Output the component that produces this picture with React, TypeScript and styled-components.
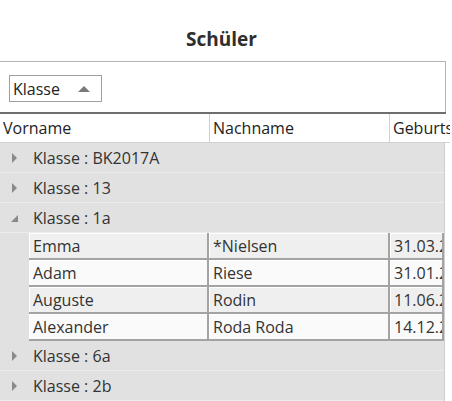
import React from "react";
import styled, { createGlobalStyle } from "styled-components";

const Global = createGlobalStyle`
  html, body { margin: 0; padding: 0; background: #ffffff; }
  body { font-family: "Open Sans", "Noto Sans", sans-serif; color: #333333; }
`;

const Page = styled.div`
  width: 452px;
  height: 401px;
  overflow: hidden;
  display: flex;
  flex-direction: column;
`;

const Title = styled.h1`
  margin: 0;
  height: 61px;
  box-sizing: border-box;
  padding-top: 27px;
  padding-right: 9px;
  text-align: center;
  font-size: 19px;
  font-weight: 700;
  color: #2e2e2e;
  line-height: 24px;
`;

const Panel = styled.div`
  margin-left: -2px;
  width: 448px;
  display: flex;
  flex-direction: column;
`;

const Toolbar = styled.div`
  height: 51px;
  box-sizing: border-box;
  border: 1px solid #b4b4b4;
  border-bottom: none;
  padding: 13px 0 0 10px;
`;

const GroupChip = styled.div`
  width: 93px;
  height: 27px;
  box-sizing: border-box;
  border: 1px solid #a0a0a0;
  display: flex;
  align-items: center;
  justify-content: space-between;
  padding: 0 11px 0 3px;
  font-size: 16px;
  color: #222222;
`;

const SortArrow = styled.span`
  width: 0;
  height: 0;
  border-left: 6px solid transparent;
  border-right: 6px solid transparent;
  border-bottom: 6px solid #7a7a7a;
`;

const Grid = styled.div`
  border-top: 2px solid #6e6e6e;
  display: flex;
  flex-direction: column;
`;

const HeaderRow = styled.div`
  display: grid;
  grid-template-columns: 210px 180px 1fr;
  height: 28px;
  border-bottom: 1px solid #d2d2d2;
  margin-left: 2px;
  width: 450px;
`;

const HeaderCell = styled.div<{ $last?: boolean }>`
  display: flex;
  align-items: center;
  padding-left: 3px;
  font-size: 16px;
  color: #222222;
  white-space: nowrap;
  overflow: hidden;
  border-right: ${(p) => (p.$last ? "none" : "1px solid #cfcfcf")};
`;

const Body = styled.div`
  margin-left: 2px;
  width: 444px;
  border-right: 1px solid #cfcfcf;
  background: #e1e1e1;
  display: flex;
  flex-direction: column;
`;

const GroupRow = styled.div`
  height: 30px;
  box-sizing: border-box;
  border-bottom: 1px solid #ececec;
  display: flex;
  align-items: center;
  font-size: 16px;
  color: #333333;
`;

const Toggle = styled.span`
  width: 33px;
  display: flex;
  justify-content: center;
  padding-right: 4px;
  box-sizing: border-box;
`;

const Closed = styled.span`
  width: 0;
  height: 0;
  border-top: 5px solid transparent;
  border-bottom: 5px solid transparent;
  border-left: 5px solid #8a8a8a;
`;

const Open = styled.span`
  width: 0;
  height: 0;
  border-left: 7px solid transparent;
  border-bottom: 7px solid #8a8a8a;
  margin-top: 2px;
`;

const DataRow = styled.div`
  display: grid;
  grid-template-columns: 29px 180px 181px 1fr;
  height: 27px;
  box-sizing: border-box;
`;

const Gutter = styled.div`
  background: #e1e1e1;
`;

const Cell = styled.div<{ $alt: boolean }>`
  background: ${(p) => (p.$alt ? "#fafafa" : "#efefef")};
  border-right: 2px solid #a3a3a3;
  border-bottom: 2px solid #a3a3a3;
  box-shadow: inset 1px 1px 0 #ffffff;
  display: flex;
  align-items: center;
  padding-left: 4px;
  font-size: 16px;
  color: #333333;
  white-space: nowrap;
  overflow: hidden;
`;

type Student = { first: string; last: string; born: string };

const groups: { name: string; open: boolean; rows: Student[] }[] = [
  { name: "BK2017A", open: false, rows: [] },
  { name: "13", open: false, rows: [] },
  {
    name: "1a",
    open: true,
    rows: [
      { first: "Emma", last: "*Nielsen", born: "31.03.2005" },
      { first: "Adam", last: "Riese", born: "31.01.2005" },
      { first: "Auguste", last: "Rodin", born: "11.06.2005" },
      { first: "Alexander", last: "Roda Roda", born: "14.12.2005" },
    ],
  },
  { name: "6a", open: false, rows: [] },
  { name: "2b", open: false, rows: [] },
];

export default function App() {
  return (
    <Page>
      <Global />
      <Title>Schüler</Title>
      <Panel>
        <Toolbar>
          <GroupChip>
            Klasse <SortArrow />
          </GroupChip>
        </Toolbar>
        <Grid>
          <HeaderRow>
            <HeaderCell>Vorname</HeaderCell>
            <HeaderCell>Nachname</HeaderCell>
            <HeaderCell $last>Geburtsdatum</HeaderCell>
          </HeaderRow>
          <Body>
            {groups.map((g) => (
              <React.Fragment key={g.name}>
                <GroupRow>
                  <Toggle>{g.open ? <Open /> : <Closed />}</Toggle>
                  Klasse : {g.name}
                </GroupRow>
                {g.open &&
                  g.rows.map((r, i) => (
                    <DataRow key={r.first}>
                      <Gutter />
                      <Cell $alt={i % 2 === 1}>{r.first}</Cell>
                      <Cell $alt={i % 2 === 1}>{r.last}</Cell>
                      <Cell $alt={i % 2 === 1}>{r.born}</Cell>
                    </DataRow>
                  ))}
              </React.Fragment>
            ))}
          </Body>
        </Grid>
      </Panel>
    </Page>
  );
}
